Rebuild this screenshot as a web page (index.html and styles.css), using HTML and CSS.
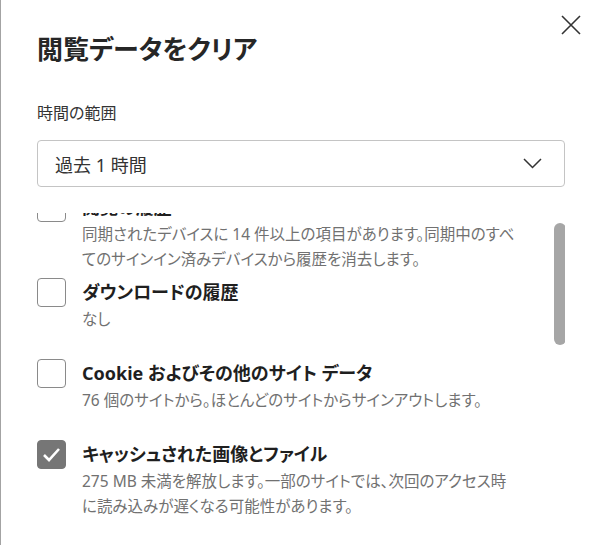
FILE: index.html
```html
<!DOCTYPE html>
<html lang="ja">
<head>
  <meta charset="UTF-8">
  <meta name="viewport" content="width=device-width, initial-scale=1.0">
  <title>閲覧データをクリア</title>
  <link rel="stylesheet" href="styles.css">
</head>
<body>
  <div class="dialog">
    <button class="close-btn" aria-label="閉じる">
      <svg width="20" height="20" viewBox="0 0 20 20"><path d="M1 1 L19 19 M19 1 L1 19" stroke="#333" stroke-width="1.6" fill="none"/></svg>
    </button>
    <h2 class="title">閲覧データをクリア</h2>

    <div class="field-label">時間の範囲</div>
    <div class="select">
      <span>過去 1 時間</span>
      <svg width="19" height="11" viewBox="0 0 19 11"><path d="M1 1 L9.5 9.5 L18 1" stroke="#333" stroke-width="1.5" fill="none"/></svg>
    </div>

    <div class="scroll-area">
      <div class="list">
        <div class="item">
          <span class="checkbox"></span>
          <div class="item-text">
            <div class="item-title">閲覧の履歴</div>
            <div class="item-desc">同期されたデバイスに 14 件以上の項目があります。同期中のすべてのサインイン済みデバイスから履歴を消去します。</div>
          </div>
        </div>
        <div class="item">
          <span class="checkbox"></span>
          <div class="item-text">
            <div class="item-title">ダウンロードの履歴</div>
            <div class="item-desc">なし</div>
          </div>
        </div>
        <div class="item">
          <span class="checkbox"></span>
          <div class="item-text">
            <div class="item-title">Cookie およびその他のサイト データ</div>
            <div class="item-desc">76 個のサイトから。ほとんどのサイトからサインアウトします。</div>
          </div>
        </div>
        <div class="item">
          <span class="checkbox checked">
            <svg width="19" height="15" viewBox="0 0 19 15"><path d="M2 8 L7 13 L17 2" stroke="#fff" stroke-width="2.6" fill="none"/></svg>
          </span>
          <div class="item-text">
            <div class="item-title">キャッシュされた画像とファイル</div>
            <div class="item-desc">275 MB 未満を解放します。一部のサイトでは、次回のアクセス時に読み込みが遅くなる可能性があります。</div>
          </div>
        </div>
      </div>
      <div class="scroll-thumb"></div>
    </div>
  </div>
</body>
</html>
```

FILE: styles.css
```css
body {
  margin: 0;
  background: #fff;
  font-family: "Noto Sans", "Noto Sans CJK JP", sans-serif;
  font-feature-settings: "palt";
  color: #242424;
}
.dialog {
  position: relative;
  height: 545px;
  box-sizing: border-box;
  padding: 31px 34px 0 36px;
  border-left: 1px solid #a3a3a3;
  overflow: hidden;
}
.close-btn {
  position: absolute;
  top: 15px;
  right: 18px;
  padding: 0;
  border: none;
  background: none;
  cursor: pointer;
}
.close-btn svg {
  display: block;
}
.title {
  margin: 0;
  font-size: 26px;
  line-height: 36px;
  font-weight: 700;
  color: #262626;
}
.field-label {
  margin-top: 34px;
  font-size: 16px;
  line-height: 24px;
  color: #333;
}
.select {
  margin-top: 15px;
  height: 47px;
  box-sizing: border-box;
  border: 1px solid #c4c4c4;
  border-radius: 4px;
  padding: 0 22px 0 17px;
  display: flex;
  align-items: center;
  justify-content: space-between;
  font-size: 18px;
  color: #333;
}
.scroll-area {
  position: relative;
  margin-top: 26px;
  height: 310px;
  overflow: hidden;
}
.list {
  margin-top: -21px;
}
.item {
  display: flex;
  min-height: 76px;
  margin-bottom: 5px;
}
.checkbox {
  flex-shrink: 0;
  width: 29px;
  height: 29px;
  box-sizing: border-box;
  margin-top: 1px;
  border: 1px solid #8a8a8a;
  border-radius: 4px;
  display: flex;
  align-items: center;
  justify-content: center;
}
.checkbox.checked {
  background: #767676;
  border-color: #767676;
}
.item-text {
  margin-left: 16px;
  padding-right: 48px;
}
.item-title {
  font-size: 18px;
  line-height: 30px;
  font-weight: 700;
  color: #1f1f1f;
}
.item-desc {
  font-size: 15.5px;
  line-height: 25px;
  color: #717171;
}
.scroll-thumb {
  position: absolute;
  top: 10px;
  right: -1px;
  width: 12px;
  height: 122px;
  border-radius: 6px;
  background: #a6a6a6;
}
```
